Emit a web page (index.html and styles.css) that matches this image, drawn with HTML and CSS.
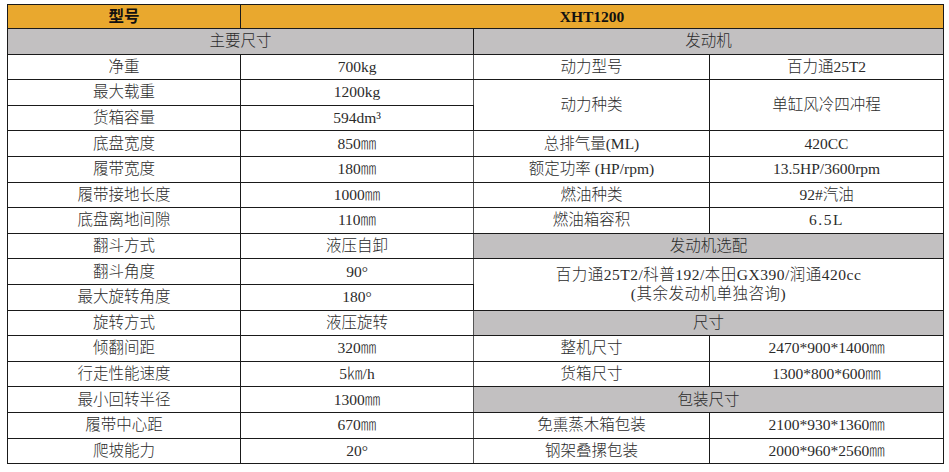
FILE: index.html
```html
<!DOCTYPE html>
<html lang="zh-CN">
<head>
<meta charset="utf-8">
<title>XHT1200</title>
<link rel="stylesheet" href="styles.css">
</head>
<body>
<table class="spec">
  <colgroup>
    <col class="c1"><col class="c2"><col class="c3"><col class="c4">
  </colgroup>
  <tr class="head">
    <td class="b">型号</td>
    <td class="b" colspan="3">XHT1200</td>
  </tr>
  <tr>
    <td class="sec left" colspan="2">主要尺寸</td>
    <td class="sec" colspan="2">发动机</td>
  </tr>
  <tr>
    <td>净重</td><td class="mid">700kg</td>
    <td>动力型号</td><td>百力通25T2</td>
  </tr>
  <tr>
    <td>最大载重</td><td class="mid">1200kg</td>
    <td rowspan="2">动力种类</td><td rowspan="2">单缸风冷四冲程</td>
  </tr>
  <tr>
    <td>货箱容量</td><td class="mid">594dm³</td>
  </tr>
  <tr>
    <td>底盘宽度</td><td class="mid">850㎜</td>
    <td>总排气量(ML)</td><td>420CC</td>
  </tr>
  <tr>
    <td>履带宽度</td><td class="mid">180㎜</td>
    <td>额定功率 (HP/rpm)</td><td>13.5HP/3600rpm</td>
  </tr>
  <tr>
    <td>履带接地长度</td><td class="mid">1000㎜</td>
    <td>燃油种类</td><td>92#汽油</td>
  </tr>
  <tr>
    <td>底盘离地间隙</td><td class="mid">110㎜</td>
    <td>燃油箱容积</td><td class="wide">6.5L</td>
  </tr>
  <tr>
    <td>翻斗方式</td><td class="mid">液压自卸</td>
    <td class="sec" colspan="2">发动机选配</td>
  </tr>
  <tr>
    <td>翻斗角度</td><td class="mid">90°</td>
    <td class="opt" colspan="2" rowspan="2">百力通25T2/科普192/本田GX390/润通420cc<br>(其余发动机单独咨询)</td>
  </tr>
  <tr>
    <td>最大旋转角度</td><td class="mid">180°</td>
  </tr>
  <tr>
    <td>旋转方式</td><td class="mid">液压旋转</td>
    <td class="sec" colspan="2">尺寸</td>
  </tr>
  <tr>
    <td>倾翻间距</td><td class="mid">320㎜</td>
    <td>整机尺寸</td><td>2470*900*1400㎜</td>
  </tr>
  <tr>
    <td>行走性能速度</td><td class="mid">5㎞/h</td>
    <td>货箱尺寸</td><td>1300*800*600㎜</td>
  </tr>
  <tr>
    <td>最小回转半径</td><td class="mid">1300㎜</td>
    <td class="sec" colspan="2">包装尺寸</td>
  </tr>
  <tr>
    <td>履带中心距</td><td class="mid">670㎜</td>
    <td>免熏蒸木箱包装</td><td>2100*930*1360㎜</td>
  </tr>
  <tr>
    <td>爬坡能力</td><td class="mid">20°</td>
    <td>钢架叠摞包装</td><td>2000*960*2560㎜</td>
  </tr>
</table>
</body>
</html>
```

FILE: styles.css
```css
html, body {
  margin: 0;
  padding: 0;
  background: #ffffff;
}

body {
  padding: 4px 0 0 7px;
  font-family: "Liberation Serif", "Noto Sans CJK SC", serif;
  font-size: 15.5px;
  color: #2b2b2b;
}

.spec {
  border-collapse: collapse;
  table-layout: fixed;
  width: 936px;
}

.c1 { width: 233px; }
.c2 { width: 233px; }
.c3 { width: 236px; }
.c4 { width: 234px; }

.spec td {
  border: 1px solid #1a1a1a;
  text-align: center;
  vertical-align: middle;
  padding: 0;
  height: 24.6px;
  line-height: 18px;
  font-weight: 300;
  white-space: nowrap;
}

.spec tr.head td {
  background: #e9a82e;
  height: 23px;
  font-weight: 700;
  color: #111;
}

.spec td.sec {
  background: #c2c0c1;
}

.spec td.mid {
  border-right-color: #555;
}

.spec td.opt {
  line-height: 19px;
  letter-spacing: 0.5px;
}

.spec td.wide {
  letter-spacing: 1.5px;
}
```
